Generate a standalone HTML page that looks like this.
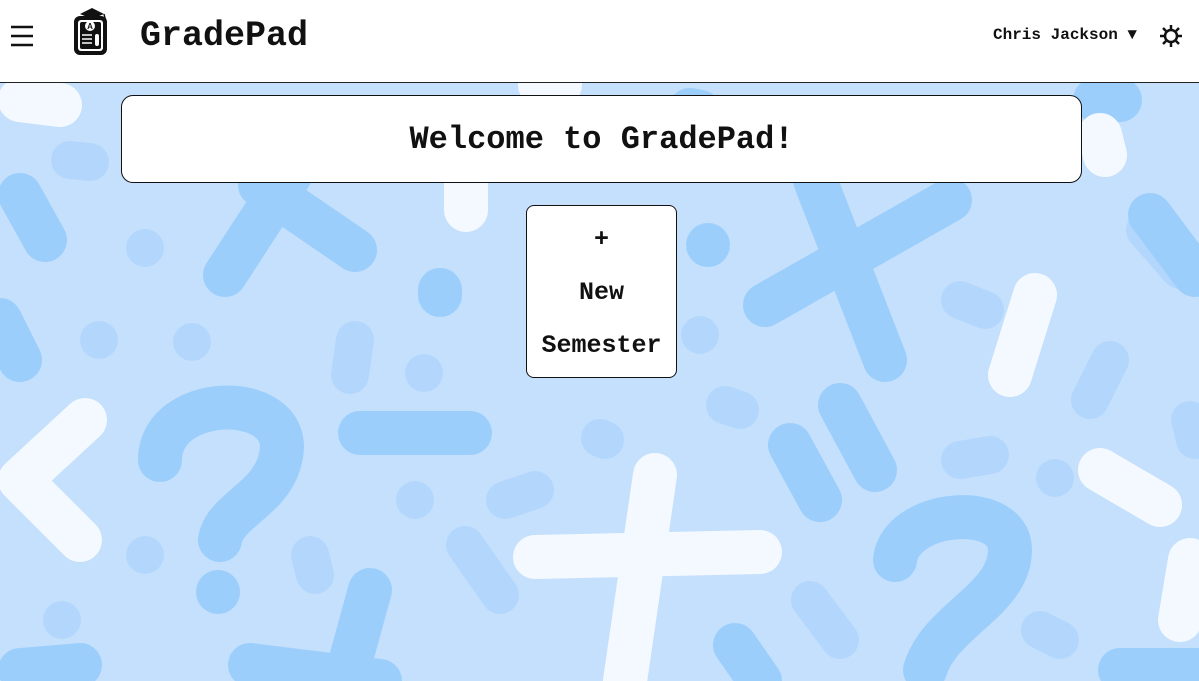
<!DOCTYPE html>
<html><head><meta charset="utf-8"><style>
html,body{margin:0;padding:0;width:1199px;height:681px;overflow:hidden;background:#c5e0fc;font-family:"Liberation Mono",monospace;}
.hdr{position:absolute;left:0;top:0;width:1199px;height:82px;background:#fff;border-bottom:1px solid #222;}
.bg{position:absolute;left:0;top:83px;}
.title{position:absolute;left:140px;top:16px;font-size:35px;font-weight:bold;color:#111;}
.user{position:absolute;left:993px;top:26px;font-size:16px;font-weight:bold;color:#111;}
.welcome{position:absolute;left:121px;top:95px;width:959px;height:86px;background:#fff;border:1.5px solid #111;border-radius:12px;text-align:center;line-height:88px;font-size:32px;font-weight:bold;color:#111;}
.btn{position:absolute;left:526px;top:205px;width:151px;height:173px;background:#fff;border:1.5px solid #111;border-radius:8px;text-align:center;font-size:25px;font-weight:bold;color:#111;line-height:53px;padding-top:7px;box-sizing:border-box;}
</style></head><body>
<svg class="bg" width="1199" height="598" viewBox="0 83 1199 598" stroke-linecap="round" fill="none">
<g stroke="#b3d7fc" stroke-width="38">
<line x1="70" y1="160" x2="90" y2="162"/><line x1="145" y1="248" x2="145" y2="248"/><line x1="99" y1="340" x2="99" y2="340"/>
<line x1="192" y1="342" x2="192" y2="342"/><line x1="355" y1="340" x2="350" y2="375"/><line x1="424" y1="373" x2="424" y2="373"/>
<line x1="415" y1="500" x2="415" y2="500"/><line x1="505" y1="500" x2="535" y2="490"/><line x1="310" y1="555" x2="315" y2="575"/>
<line x1="145" y1="555" x2="145" y2="555"/><line x1="465" y1="545" x2="500" y2="595"/><line x1="62" y1="620" x2="62" y2="620"/>
<line x1="700" y1="335" x2="700" y2="335"/><line x1="725" y1="405" x2="740" y2="410"/><line x1="960" y1="300" x2="985" y2="310"/>
<line x1="960" y1="460" x2="990" y2="455"/><line x1="1055" y1="478" x2="1055" y2="478"/><line x1="1110" y1="360" x2="1090" y2="400"/>
<line x1="1145" y1="230" x2="1180" y2="270"/><line x1="810" y1="600" x2="840" y2="640"/><line x1="1040" y1="630" x2="1060" y2="640"/>
<line x1="600" y1="438" x2="605" y2="440"/><line x1="1190" y1="420" x2="1195" y2="440"/>
</g>
<g stroke="#9ccefc" stroke-width="44">
<line x1="225" y1="275" x2="290" y2="175"/><line x1="260" y1="185" x2="355" y2="250"/>
<line x1="20" y1="195" x2="45" y2="240"/><line x1="0" y1="320" x2="20" y2="360"/>
<line x1="765" y1="305" x2="950" y2="200"/><line x1="815" y1="180" x2="885" y2="360"/>
<line x1="360" y1="433" x2="470" y2="433"/>
<line x1="790" y1="445" x2="820" y2="500"/><line x1="840" y1="405" x2="875" y2="470"/>
<line x1="1150" y1="215" x2="1195" y2="275"/><line x1="440" y1="290" x2="440" y2="295"/><line x1="708" y1="245" x2="708" y2="245"/>
<line x1="218" y1="592" x2="218" y2="592"/><line x1="370" y1="590" x2="345" y2="681"/><line x1="250" y1="665" x2="380" y2="681"/>
<line x1="20" y1="670" x2="80" y2="665"/><line x1="735" y1="645" x2="760" y2="681"/><line x1="1120" y1="670" x2="1199" y2="670"/>
<path d="M160 460 C160 390 300 390 280 460 C270 500 225 510 220 540"/>
<path d="M895 560 C900 510 1010 500 1010 550 C1010 600 940 620 925 670"/>
<line x1="690" y1="110" x2="700" y2="112"/><line x1="1095" y1="100" x2="1120" y2="100"/>
</g>
<g stroke="#f4f9ff" stroke-width="44">
<path d="M85 420 L20 480 L80 540" stroke-linejoin="round"/>
<line x1="1035" y1="295" x2="1010" y2="375"/>
<line x1="535" y1="557" x2="760" y2="552"/><line x1="655" y1="475" x2="625" y2="681"/>
<line x1="466" y1="180" x2="466" y2="210"/><line x1="1100" y1="135" x2="1105" y2="155"/>
<line x1="1100" y1="470" x2="1160" y2="505"/><line x1="1190" y1="560" x2="1180" y2="620"/>
<line x1="20" y1="100" x2="60" y2="105"/><line x1="540" y1="85" x2="560" y2="85"/>
</g>
</svg>
<div class="hdr">
<svg style="position:absolute;left:10px;top:24px" width="24" height="24"><g stroke="#111" stroke-width="2.4"><line x1="1" y1="3" x2="23" y2="3"/><line x1="1" y1="12" x2="23" y2="12"/><line x1="1" y1="21" x2="23" y2="21"/></g></svg>
<svg style="position:absolute;left:72px;top:6px" width="40" height="50" viewBox="0 0 40 50">
<polygon points="8,8 20,2 32,8 20,13" fill="#111"/><line x1="32" y1="8" x2="34" y2="16" stroke="#111" stroke-width="1.5"/>
<rect x="2" y="10" width="33" height="39" rx="6" fill="#111"/>
<rect x="6" y="14" width="25" height="31" rx="3" fill="#fff"/>
<rect x="8" y="16" width="21" height="27" rx="2" fill="#111"/>
<circle cx="18" cy="20" r="5" fill="#fff"/><text x="18" y="23" font-size="8" font-family="Liberation Sans" font-weight="bold" text-anchor="middle" fill="#111">A</text>
<g stroke="#fff" stroke-width="1.5"><line x1="10" y1="29" x2="20" y2="29"/><line x1="10" y1="33" x2="20" y2="33"/><line x1="10" y1="37" x2="20" y2="37"/></g>
<rect x="23" y="28" width="4" height="12" rx="2" fill="#fff"/>
</svg>
<div class="title">GradePad</div>
<div class="user">Chris Jackson ▼</div>
<svg style="position:absolute;left:1159px;top:24px" width="24" height="24" viewBox="0 0 24 24"><g stroke="#111" stroke-width="2.5" fill="none"><circle cx="12" cy="12" r="6"/><line x1="12" y1="1" x2="12" y2="5"/><line x1="12" y1="19" x2="12" y2="23"/><line x1="1" y1="12" x2="5" y2="12"/><line x1="19" y1="12" x2="23" y2="12"/><line x1="4" y1="4" x2="7" y2="7"/><line x1="17" y1="17" x2="20" y2="20"/><line x1="4" y1="20" x2="7" y2="17"/><line x1="17" y1="7" x2="20" y2="4"/></g></svg>
</div>
<div class="welcome">Welcome to GradePad!</div>
<div class="btn">+<br>New<br>Semester</div>
</body></html>
